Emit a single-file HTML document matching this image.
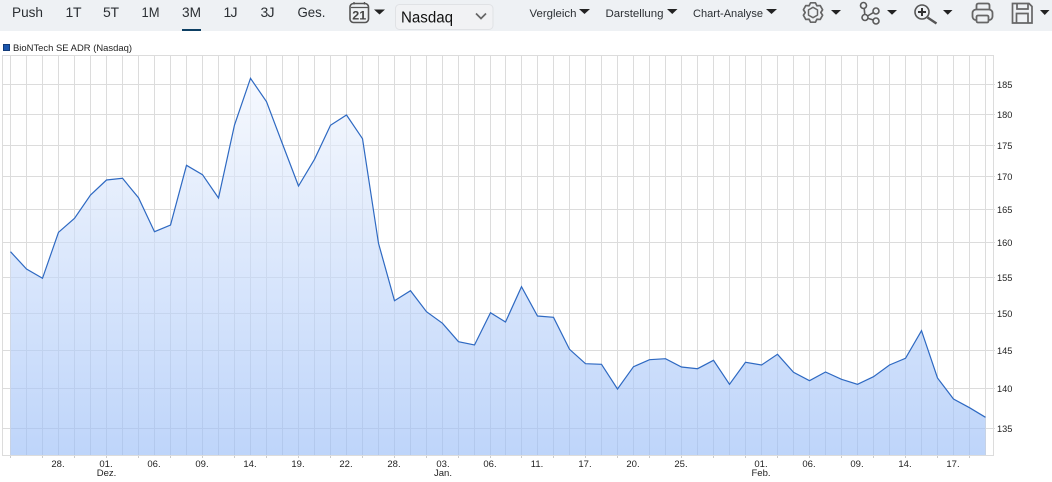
<!DOCTYPE html>
<html><head><meta charset="utf-8"><style>
html,body{margin:0;padding:0;background:#fff;width:1052px;height:482px;overflow:hidden}
svg{display:block}
text{font-family:"Liberation Sans",sans-serif}
.t{font-size:14px;fill:#2b2f33}
.m{font-size:11px;fill:#2b2f33}
.a{font-size:9.5px;fill:#222}
.y{font-size:9.2px;fill:#222}
</style></head><body>
<svg width="1052" height="482" viewBox="0 0 1052 482" xmlns="http://www.w3.org/2000/svg">
<defs><linearGradient id="g" gradientUnits="userSpaceOnUse" x1="0" y1="78" x2="0" y2="455">
<stop offset="0" stop-color="#f1f5fd" stop-opacity=".63"/><stop offset="1" stop-color="#98bcf7" stop-opacity=".63"/></linearGradient></defs>
<rect width="1052" height="31" fill="#eef1f4"/>
<text class="t" x="12" y="17" textLength="31" lengthAdjust="spacingAndGlyphs">Push</text>
<text class="t" x="65.500" y="17" textLength="16" lengthAdjust="spacing">1T</text>
<text class="t" x="103" y="17" textLength="16" lengthAdjust="spacing">5T</text>
<text class="t" x="141.500" y="17" textLength="18" lengthAdjust="spacingAndGlyphs">1M</text>
<text class="t" x="182" y="17" textLength="19" lengthAdjust="spacingAndGlyphs">3M</text>
<text class="t" x="223.500" y="17" textLength="14" lengthAdjust="spacing">1J</text>
<text class="t" x="260.500" y="17" textLength="14" lengthAdjust="spacing">3J</text>
<text class="t" x="297.500" y="17" textLength="28" lengthAdjust="spacingAndGlyphs">Ges.</text>
<rect x="182" y="29" width="19" height="2" fill="#0d3f63"/>
<!-- calendar -->
<rect x="350" y="3.500" width="18.500" height="19" rx="3.500" fill="none" stroke="#555" stroke-width="1.600"/>
<path d="M354 2v2.500M364.500 2v2.500M351 7.500h17" stroke="#555" stroke-width="1.300" fill="none"/>
<text x="352.300" y="19.500" style="font-size:11.500px;font-weight:bold;fill:#444" textLength="14" lengthAdjust="spacingAndGlyphs">21</text>
<path d="M374 9.500h11l-5.500 5z" fill="#222"/>
<!-- select -->
<rect x="395.500" y="4.500" width="97.500" height="25" rx="4" fill="#f1f2f4" stroke="#e0e2e5"/>
<text x="401" y="22.500" style="font-size:15.400px;fill:#111" textLength="52" lengthAdjust="spacingAndGlyphs">Nasdaq</text>
<path d="M476 13.500l5 5 5-5" fill="none" stroke="#666" stroke-width="1.700"/>
<!-- menus -->
<text class="m" x="529.500" y="17" textLength="47" lengthAdjust="spacingAndGlyphs">Vergleich</text><path d="M579 9h11l-5.500 5z" fill="#222"/>
<text class="m" x="605.500" y="17" textLength="58" lengthAdjust="spacingAndGlyphs">Darstellung</text><path d="M667 9h10.500l-5.250 5z" fill="#222"/>
<text class="m" x="693" y="17" textLength="70" lengthAdjust="spacingAndGlyphs">Chart-Analyse</text><path d="M766 9h11l-5.500 5z" fill="#222"/>
<!-- gear -->
<path d="M810.600 2.800L815.400 2.800L816.900 5.750L820.200 5.550L822.600 9.740L820.800 12.500L822.600 15.260L820.200 19.450L816.900 19.250L815.400 22.200L810.600 22.200L809.100 19.250L805.800 19.450L803.400 15.260L805.200 12.500L803.400 9.740L805.800 5.550L809.100 5.750Z" fill="none" stroke="#666" stroke-width="1.700" stroke-linejoin="round"/>
<path d="M813 7.300l4.500 2.600v5.200l-4.500 2.600-4.500-2.600v-5.200z" fill="none" stroke="#666" stroke-width="1.500" stroke-linejoin="round"/>
<path d="M831 10h10l-5 4.700z" fill="#222"/>
<!-- nodes -->
<g fill="none" stroke="#5a5a5a" stroke-width="1.600"><circle cx="863.500" cy="5.500" r="3"/><circle cx="876" cy="11" r="3"/><circle cx="865" cy="17.500" r="3"/><circle cx="876" cy="21" r="3"/><path d="M864.200 8.500l.6 6M867.600 16l5.800-3.500M868 18.400l5 1.500"/></g>
<path d="M887 10h10l-5 4.700z" fill="#222"/>
<!-- zoom -->
<circle cx="922" cy="12" r="7" fill="none" stroke="#555" stroke-width="1.600"/>
<path d="M918 12h8M922 8v8" stroke="#333" stroke-width="2"/>
<path d="M927.500 17.500l9 6" stroke="#555" stroke-width="2.400"/>
<path d="M943 10h9.500l-4.750 4.700z" fill="#222"/>
<!-- printer -->
<g fill="none" stroke="#666" stroke-width="1.800"><path d="M976.500 9.500V5.500q0-2 2-2h9q2 0 2 2v4"/><rect x="972.500" y="9.500" width="20" height="10.500" rx="3.500"/><rect x="976.500" y="15.500" width="12" height="7" rx="1.500" fill="#eef1f4"/></g>
<!-- save -->
<g fill="none" stroke="#666" stroke-width="1.700"><path d="M1012.500 3.500h16.500l3 3v16.500h-19.500z"/><path d="M1017 3.500v5.500h11v-5.500M1016.500 23v-9.500h11.500v9.500"/></g>
<path d="M1040 10h9.500l-4.750 5z" fill="#222"/>

<!-- legend -->
<rect x="3.500" y="44.500" width="6" height="6" fill="#1b56ad" stroke="#123a78"/>
<text class="a" x="13" y="51" textLength="119" lengthAdjust="spacingAndGlyphs">BioNTech SE ADR (Nasdaq)</text>

<!-- grid -->
<g stroke="#dcdcdc" fill="none">
<path d="M2.500 55.500H993.500V455.500H2.500ZM2.500 84.500H995M2.500 114.500H995M2.500 145.500H995M2.500 176.500H995M2.500 209.500H995M2.500 242.500H995M2.500 277.500H995M2.500 313.500H995M2.500 350.500H995M2.500 388.500H995M2.500 428.500H995
M10.500 55V455M26.500 55V455M42.500 55V455M58.500 55V455M74.500 55V455M90.500 55V455M106.500 55V455M122.500 55V455M138.500 55V455M154.500 55V455M170.500 55V455M186.500 55V455M202.500 55V455M218.500 55V455M234.500 55V455M250.500 55V455M266.500 55V455M282.500 55V455M298.500 55V455M314.500 55V455M330.500 55V455M346.500 55V455M362.500 55V455M378.500 55V455M394.500 55V455M410.500 55V455M426.500 55V455M442.500 55V455M458.500 55V455M474.500 55V455M490.500 55V455M505.500 55V455M521.500 55V455M537.500 55V455M553.500 55V455M569.500 55V455M585.500 55V455M601.500 55V455M617.500 55V455M633.500 55V455M649.500 55V455M665.500 55V455M681.500 55V455M697.500 55V455M713.500 55V455M729.500 55V455M745.500 55V455M761.500 55V455M777.500 55V455M793.500 55V455M809.500 55V455M825.500 55V455M841.500 55V455M857.500 55V455M873.500 55V455M889.500 55V455M905.500 55V455M921.500 55V455M937.500 55V455M953.500 55V455M969.500 55V455M985.500 55V455"/>
</g>
<path fill="url(#g)" d="M10.500 251.700L26.500 269L42.500 278.300L58.500 232.300L74.500 218.300L90.500 195L106.500 180L122.500 178.300L138.500 197.700L154.500 231.700L170.500 225L186.500 165.300L202.500 174.700L218.500 198L234.500 125L250.500 78.300L266.500 101.700L282.500 144L298.500 186L314.500 159.300L330.500 125.300L346.500 115L362.500 138.700L378.500 243.300L394.500 300.700L410.500 290.700L426.500 311.700L442.500 323.300L458.500 341.700L474.500 345L490.500 312.700L505.500 322L521.500 286.700L537.500 316L553.500 317.300L569.500 349.300L585.500 363.700L601.500 364.300L617.500 389L633.500 366.700L649.500 359.700L665.500 358.700L681.500 367L697.500 368.700L713.500 360.300L729.500 384.300L745.500 362.300L761.500 365L777.500 354.300L793.500 372.300L809.500 380.700L825.500 372L841.500 379.300L857.500 384.300L873.500 376.700L889.500 365L905.500 358.300L921.500 330.700L937.500 378L953.500 399L969.500 407.700L985.500 417.300V455H10.500Z"/>
<path fill="none" stroke="#2e69c2" stroke-width="1.200" d="M10.500 251.700L26.500 269L42.500 278.300L58.500 232.300L74.500 218.300L90.500 195L106.500 180L122.500 178.300L138.500 197.700L154.500 231.700L170.500 225L186.500 165.300L202.500 174.700L218.500 198L234.500 125L250.500 78.300L266.500 101.700L282.500 144L298.500 186L314.500 159.300L330.500 125.300L346.500 115L362.500 138.700L378.500 243.300L394.500 300.700L410.500 290.700L426.500 311.700L442.500 323.300L458.500 341.700L474.500 345L490.500 312.700L505.500 322L521.500 286.700L537.500 316L553.500 317.300L569.500 349.300L585.500 363.700L601.500 364.300L617.500 389L633.500 366.700L649.500 359.700L665.500 358.700L681.500 367L697.500 368.700L713.500 360.300L729.500 384.300L745.500 362.300L761.500 365L777.500 354.300L793.500 372.300L809.500 380.700L825.500 372L841.500 379.300L857.500 384.300L873.500 376.700L889.500 365L905.500 358.300L921.500 330.700L937.500 378L953.500 399L969.500 407.700L985.500 417.300"/>
<!-- ticks -->
<path stroke="#ccc" d="M10.500 456v2M42.500 456v2M74.500 456v2M106.500 456v2M138.500 456v2M170.500 456v2M202.500 456v2M234.500 456v2M266.500 456v2M298.500 456v2M330.500 456v2M362.500 456v2M394.500 456v2M426.500 456v2M458.500 456v2M490.500 456v2M521.500 456v2M553.500 456v2M585.500 456v2M617.500 456v2M649.500 456v2M681.500 456v2M713.500 456v2M745.500 456v2M777.500 456v2M809.500 456v2M841.500 456v2M873.500 456v2M905.500 456v2M937.500 456v2M969.500 456v2"/>
<!-- y labels -->
<text class="y" x="997" y="88">185</text><text class="y" x="997" y="118">180</text><text class="y" x="997" y="149">175</text><text class="y" x="997" y="180">170</text><text class="y" x="997" y="213">165</text><text class="y" x="997" y="246">160</text><text class="y" x="997" y="281">155</text><text class="y" x="997" y="317">150</text><text class="y" x="997" y="354">145</text><text class="y" x="997" y="392">140</text><text class="y" x="997" y="432">135</text>
<!-- x labels -->
<text class="a" text-anchor="middle" x="58" y="467">28.</text>
<text class="a" text-anchor="middle" x="106" y="467">01.</text><text class="a" text-anchor="middle" x="106.500" y="476">Dez.</text>
<text class="a" text-anchor="middle" x="154" y="467">06.</text>
<text class="a" text-anchor="middle" x="202" y="467">09.</text>
<text class="a" text-anchor="middle" x="250" y="467">14.</text>
<text class="a" text-anchor="middle" x="298" y="467">19.</text>
<text class="a" text-anchor="middle" x="346" y="467">22.</text>
<text class="a" text-anchor="middle" x="394" y="467">28.</text>
<text class="a" text-anchor="middle" x="443" y="467">03.</text><text class="a" text-anchor="middle" x="443" y="476">Jan.</text>
<text class="a" text-anchor="middle" x="490" y="467">06.</text>
<text class="a" text-anchor="middle" x="537" y="467">11.</text>
<text class="a" text-anchor="middle" x="585" y="467">17.</text>
<text class="a" text-anchor="middle" x="633" y="467">20.</text>
<text class="a" text-anchor="middle" x="681" y="467">25.</text>
<text class="a" text-anchor="middle" x="761" y="467">01.</text><text class="a" text-anchor="middle" x="761" y="476">Feb.</text>
<text class="a" text-anchor="middle" x="809" y="467">06.</text>
<text class="a" text-anchor="middle" x="857" y="467">09.</text>
<text class="a" text-anchor="middle" x="905" y="467">14.</text>
<text class="a" text-anchor="middle" x="953" y="467">17.</text>
</svg>
</body></html>
